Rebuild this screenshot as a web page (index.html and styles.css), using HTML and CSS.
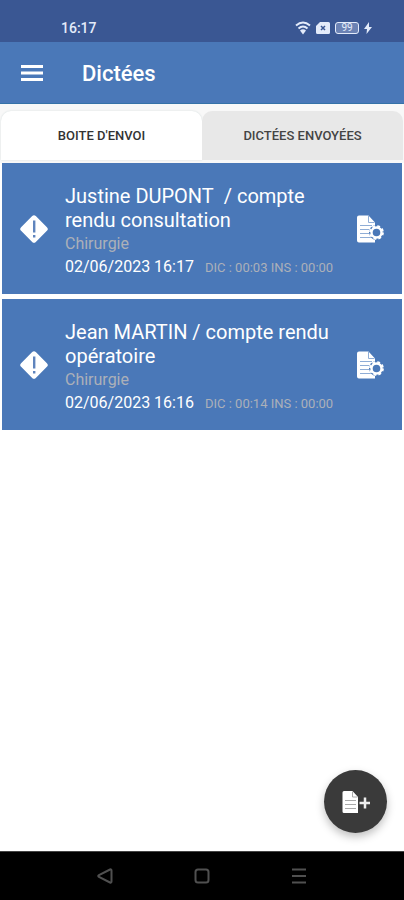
FILE: index.html
```html
<!DOCTYPE html>
<html lang="fr">
<head>
<meta charset="utf-8">
<meta name="viewport" content="width=device-width, initial-scale=1">
<title>Dictées</title>
<link rel="stylesheet" href="styles.css">
</head>
<body>
<svg class="defs" aria-hidden="true">
  <symbol id="warning" viewBox="0 0 28 28">
    <path fill="#fff" d="M12.2 1.1a2.5 2.5 0 0 1 3.6 0l11.1 11.1a2.5 2.5 0 0 1 0 3.6L15.8 26.9a2.5 2.5 0 0 1-3.6 0L1.100 15.800a2.500 2.500 0 0 1 0-3.600z"/>
    <path fill="#5f84bd" d="M13 5.500h2.400v12h-2.400zM13 20h2.400v2.500h-2.400z"/>
  </symbol>
  <symbol id="file-settings" viewBox="0 0 28 28">
    <path fill="#fff" d="M3 .5h9.500l6.500 7v20H3a2 2 0 0 1-2-2v-23a2 2 0 0 1 2-2z"/>
    <path fill="none" stroke="#8fadd6" d="M12.500 1v6.500h6M4 10.500h12M4 14.500h9M4 18.500h9M4 22.500h12"/>
    <circle cx="20.500" cy="17.500" r="7.500" fill="#4a78b8"/>
    <circle cx="20.500" cy="17.500" r="5" fill="none" stroke="#fff" stroke-width="2.400"/>
    <circle cx="20.500" cy="17.500" r="6.400" fill="none" stroke="#fff" stroke-width="2" stroke-dasharray="2.800 2.226"/>
  </symbol>
</svg>

<div class="status">
  <span class="clock">16:17</span>
  <span class="indicators">
    <svg width="16" height="14" viewBox="0 0 16 14" fill="none" stroke="#e3ebfa" stroke-width="2"><path d="M1 4.500q7-6 14 0M3.500 7.500q4.500-4 9 0"/><path fill="#e3ebfa" stroke="none" d="M5 9.500q3-2.500 6 0l-3 4z"/></svg>
    <svg width="14" height="12" viewBox="0 0 14 12"><path fill="#e3ebfa" d="M4 0h8.500a1.500 1.500 0 0 1 1.500 1.500v9a1.500 1.500 0 0 1-1.500 1.500h-11a1.500 1.500 0 0 1-1.500-1.500V4z"/><path stroke="#3a5793" stroke-width="1.500" d="M5 4l4 4M9 4l-4 4"/></svg>
    <span class="battery">99</span>
    <svg width="8" height="12" viewBox="0 0 8 12"><path fill="#e3ebfa" d="M5 0L0 7h3l-.5 5L8 5H5z"/></svg>
  </span>
</div>

<header class="appbar">
  <button class="menu" type="button" aria-label="Menu"><svg width="22" height="16" viewBox="0 0 22 16"><path fill="#fff" d="M0 0h22v3H0zM0 6.500h22v3H0zM0 13h22v3H0z"/></svg></button>
  <h1>Dictées</h1>
</header>

<nav class="tabs">
  <button class="tab active" type="button">BOITE D'ENVOI</button>
  <button class="tab" type="button">DICTÉES ENVOYÉES</button>
</nav>

<main class="list">
  <article class="card">
    <svg class="icon" width="28" height="28"><use href="#warning"/></svg>
    <div class="body">
      <h2>Justine DUPONT&nbsp; / compte rendu consultation</h2>
      <p class="service">Chirurgie</p>
      <p class="meta"><time>02/06/2023 16:17</time><span class="length">DIC : 00:03 INS : 00:00</span></p>
    </div>
    <button class="edit" type="button" aria-label="Paramètres"><svg class="icon" width="28" height="28"><use href="#file-settings"/></svg></button>
  </article>
  <article class="card">
    <svg class="icon" width="28" height="28"><use href="#warning"/></svg>
    <div class="body">
      <h2>Jean MARTIN / compte rendu opératoire</h2>
      <p class="service">Chirurgie</p>
      <p class="meta"><time>02/06/2023 16:16</time><span class="length">DIC : 00:14 INS : 00:00</span></p>
    </div>
    <button class="edit" type="button" aria-label="Paramètres"><svg class="icon" width="28" height="28"><use href="#file-settings"/></svg></button>
  </article>
</main>

<footer class="bottom">
  <button class="fab" type="button" aria-label="Nouvelle dictée"><svg width="28" height="24" viewBox="0 0 28 24"><path fill="#fff" d="M2 1h8.500l5.500 6v16H2a1.500 1.500 0 0 1-1.500-1.500v-19A1.500 1.500 0 0 1 2 1z"/><path fill="none" stroke="#aaa" d="M10.500 1.500v5.500h5M3 10.500h11M3 14.500h11M3 18.500h11"/><path stroke="#eee" stroke-width="2.500" d="M17.500 13h11M23 7.500v11"/></svg></button>
  <div class="system">
    <button type="button" aria-label="Retour"><svg width="16" height="16" viewBox="0 0 16 16"><path d="M13 1.500Q14.500 1 14.500 2.500v11q0 1.500-1.500 1L2 9Q.5 8 2 7z"/></svg></button>
    <button type="button" aria-label="Accueil"><svg width="16" height="16" viewBox="0 0 16 16"><rect x="1.500" y="1.500" width="13" height="13" rx="2.500"/></svg></button>
    <button type="button" aria-label="Applications"><svg width="16" height="16" viewBox="0 0 16 16"><path d="M1 1.500h14M1 8h14M1 14.500h14"/></svg></button>
  </div>
</footer>
</body>
</html>
```

FILE: styles.css
```css
* { box-sizing: border-box; }
body {
  margin: 0;
  min-height: 100vh;
  display: flex;
  flex-direction: column;
  background: #fff;
  font-family: Roboto, "Liberation Sans", sans-serif;
}
h1, h2, p { margin: 0; font-weight: 400; }
button {
  border: 0;
  padding: 0;
  background: none;
  font: inherit;
  color: inherit;
}
svg { display: block; flex: none; }
.defs { position: absolute; width: 0; height: 0; }

.status {
  height: 42px;
  padding: 14px 32px 0 61px;
  display: flex;
  justify-content: space-between;
  align-items: flex-start;
  background: #3a5793;
  color: #e3ebfa;
}
.clock { font-size: 14px; line-height: 28px; font-weight: 500; }
.indicators { display: flex; align-items: center; gap: 5px; height: 28px; }
.battery {
  width: 24px;
  height: 12px;
  border: 1px solid #e3ebfa;
  border-radius: 3px;
  background: #6b82b4;
  font-size: 10px;
  line-height: 10px;
  text-align: center;
}

.appbar {
  height: 62px;
  padding: 0 21px;
  display: flex;
  align-items: center;
  gap: 39px;
  background: #4a78b8;
  border-bottom: 1px solid #3572a8;
  color: #fff;
}
h1 { font-size: 22px; line-height: 28px; font-weight: 500; padding-top: 2px; }

.tabs {
  display: flex;
  padding: 7px 1px 3px;
  background: #f8f8f8;
}
.tab {
  flex: 1;
  height: 49px;
  border-radius: 10px 10px 0 0;
  background: #e8e8e8;
  color: #444;
  font-size: 13px;
  font-weight: 500;
}
.tab.active { background: #fff; color: #333; box-shadow: 0 0 2px #d0dada; }

.list {
  flex: 1;
  display: flex;
  flex-direction: column;
  gap: 5px;
  padding: 0 2px;
  background: #fff;
}
.card {
  display: flex;
  align-items: center;
  gap: 17px;
  padding: 0 18px;
  background: #4a78b8;
  color: #fff;
}
.body { flex: 1; padding: 21px 0 15px; }
h2 { font-size: 20px; line-height: 24px; }
.service { font-size: 16px; line-height: 24px; color: #acb0b8; }
.meta {
  display: flex;
  align-items: baseline;
  gap: 11px;
  line-height: 22px;
  white-space: nowrap;
}
time { font-size: 16px; }
.length { font-size: 13px; color: #acb0b8; }

.bottom { position: relative; }
.fab {
  position: absolute;
  right: 17px;
  bottom: 67px;
  width: 63px;
  height: 63px;
  border-radius: 50%;
  display: grid;
  place-items: center;
  background: #3a3a3a;
  box-shadow: 0 4px 8px rgba(0, 0, 0, 0.25);
}
.system {
  height: 49px;
  padding: 0 56px;
  display: flex;
  justify-content: space-around;
  align-items: center;
  background: #000;
  border-top: 1px solid #444;
}
.system svg { fill: none; stroke: #505050; stroke-width: 2; }
```
